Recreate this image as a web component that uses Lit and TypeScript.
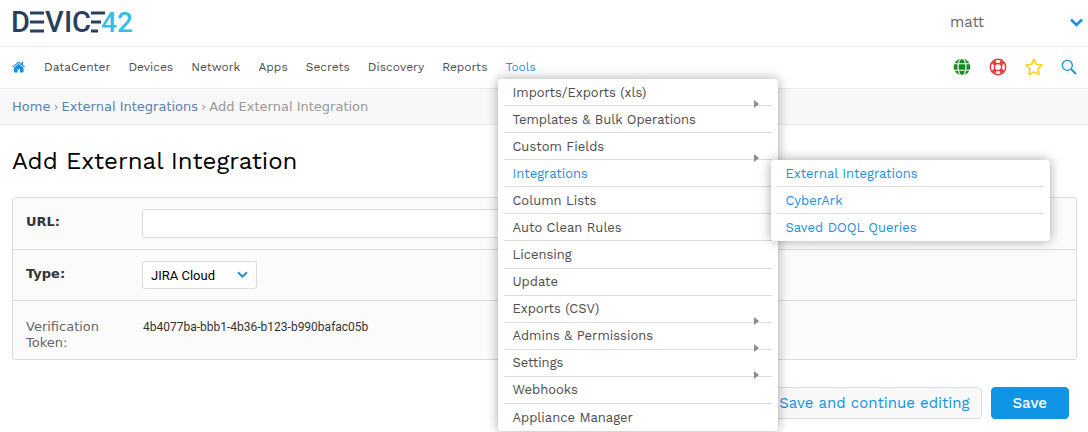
import { LitElement, html, css, svg, nothing } from "lit";
import { customElement, property, state } from "lit/decorators.js";

interface MenuEntry {
  label: string;
  arrow?: boolean;
  children?: string[];
}

const NAV = ["DataCenter", "Devices", "Network", "Apps", "Secrets", "Discovery", "Reports"];

const TOOLS: MenuEntry[] = [
  { label: "Imports/Exports (xls)", arrow: true },
  { label: "Templates & Bulk Operations" },
  { label: "Custom Fields", arrow: true },
  { label: "Integrations", children: ["External Integrations", "CyberArk", "Saved DOQL Queries"] },
  { label: "Column Lists" },
  { label: "Auto Clean Rules" },
  { label: "Licensing" },
  { label: "Update" },
  { label: "Exports (CSV)", arrow: true },
  { label: "Admins & Permissions", arrow: true },
  { label: "Settings", arrow: true },
  { label: "Webhooks" },
  { label: "Appliance Manager" },
];

// The two E letters of the wordmark are drawn as three stacked bars.
const bars = (x: number, widths: number[]) =>
  widths.map((w, i) => svg`<rect x=${x} y=${6.5 + i * 9} width=${w} height="3"></rect>`);

@customElement("d42-logo")
class D42Logo extends LitElement {
  static styles = css`
    :host { display: block; line-height: 0; }
    svg { display: block; overflow: visible; }
    .word { font-family: Roboto, sans-serif; font-size: 29px; fill: #2a3f5c; font-weight: 500; }
    .num { fill: #35bdeb; font-size: 28px; }
  `;
  render() {
    return html`<svg width="124" height="36" viewBox="0 0 124 36" role="img" aria-label="Device42">
      <g class="word">
        <text x="-1" y="27">D</text>
        ${bars(18, [14, 14, 14])}
        <text x="33" y="27">V</text>
        <text x="52" y="27">I</text>
        <text x="60" y="27">C</text>
        ${bars(79, [14, 10, 7])}
        <text class="num" x="89" y="27">42</text>
      </g>
    </svg>`;
  }
}

@customElement("tools-menu")
class ToolsMenu extends LitElement {
  @property({ attribute: false }) entries: MenuEntry[] = [];
  static styles = css`
    :host { display: block; font-size: 13px; }
    ul { list-style: none; margin: 0; padding: 0 6px; box-sizing: border-box; background: #fff;
      border-radius: 4px; box-shadow: 0 0 12px rgba(0, 0, 0, 0.35); }
    .main { display: grid; grid-auto-rows: 1fr; width: 280px; height: 352px; }
    .sub { position: absolute; left: 267px; top: 0; z-index: 2; width: 279px; display: grid;
      grid-auto-rows: 27px; }
    li { position: relative; display: flex; align-items: stretch; border-bottom: 1px solid #dcdcdc; }
    li:last-child { border-bottom: 0; }
    a { flex: 1; display: flex; align-items: center; padding: 0 8px; color: #4d4d4d;
      text-decoration: none; white-space: nowrap; }
    .active, .sub a { color: #1e8fe0; }
    .arrow { position: absolute; right: 13px; bottom: -3px; border-left: 5px solid #8c8c8c;
      border-top: 4px solid transparent; border-bottom: 4px solid transparent; }
  `;
  render() {
    return html`<ul class="main">
      ${this.entries.map(
        (e) => html`<li>
          <a class=${e.children ? "active" : ""} href="#">${e.label}</a>
          ${e.arrow ? html`<span class="arrow"></span>` : nothing}
          ${e.children
            ? html`<ul class="sub">${e.children.map((c) => html`<li><a href="#">${c}</a></li>`)}</ul>`
            : nothing}
        </li>`
      )}
    </ul>`;
  }
}

@customElement("app-root")
class AppRoot extends LitElement {
  @state() private url = "";

  static styles = css`
    :host { display: block; height: 100vh; overflow: hidden; background: #fff; color: #333;
      font-family: "Work Sans", Inter, sans-serif; }
    a { text-decoration: none; color: inherit; }
    svg { display: block; }
    .top { display: flex; align-items: center; justify-content: space-between; height: 46px;
      padding: 0 5px 0 12px; border-bottom: 1px solid #eaeaea; }
    .user { display: flex; align-items: center; justify-content: space-between; width: 133px;
      padding: 0 0 2px; border: 0; background: none; color: #666; font: 15px "Work Sans", Inter, sans-serif; }
    .nav { display: flex; align-items: center; justify-content: space-between; height: 39px;
      padding: 0 11px 2px 12px; border-bottom: 1px solid #eaeaea; font-size: 12px; color: #4d4d4d; }
    .links { display: flex; align-items: center; align-self: stretch; gap: 18px; }
    .tools { position: relative; display: flex; align-items: center; align-self: stretch; color: #1e8fe0; }
    .drop { position: absolute; left: -7px; top: 32px; z-index: 5; }
    .icons { display: flex; align-items: center; gap: 18px; }
    .crumbs { display: flex; align-items: center; gap: 3px; height: 35px; padding: 0 12px;
      background: #f8f8f8; border-bottom: 1px solid #eaeaea; color: #999;
      font-family: "DejaVu Sans", sans-serif; font-size: 13px; }
    .crumbs a { color: #5b80b2; }
    .page { padding: 20px 11px 0 12px; }
    h1 { margin: 0 0 20px; font-size: 24px; line-height: 32px; font-weight: 400; color: #000; }
    .rows { border: 1px solid #dcdcdc; border-radius: 3px; background: #fbfbfb; }
    .row { display: grid; grid-template-columns: 104px 1fr; column-gap: 12px; padding: 11px 13px;
      border-bottom: 1px solid #dcdcdc; }
    .row:last-child { border-bottom: 0; padding: 18px 13px 8px; }
    .label { font: 13px/16px "DejaVu Sans", sans-serif; color: #666; }
    .bold { font-weight: 700; color: #333; padding-top: 5px; }
    .field { box-sizing: border-box; border: 1px solid #dcdcdc; border-radius: 3px; background: #fff;
      color: #000; font: 13px Roboto, sans-serif; }
    .url { width: 500px; height: 29px; padding: 0 8px; }
    .pick { position: relative; justify-self: start; }
    .select { appearance: none; display: block; width: 115px; height: 28px; padding: 0 8px; }
    .pick svg { position: absolute; right: 9px; top: 10px; pointer-events: none; }
    .token { font: 12px/16px Roboto, sans-serif; color: #333; padding-left: 1px; }
    .actions { display: flex; justify-content: flex-end; gap: 9px; padding: 27px 8px 0; }
    .btn { height: 32px; box-sizing: border-box; border: 1px solid #dcdcdc; border-radius: 4px;
      background: #f8f8f8; padding: 0 11px; color: #1492e6; font: 15px "Work Sans", Inter, sans-serif; }
    .primary { border-color: #1095e6; background: #1095e6; color: #fff; padding: 0 21px; font-weight: 500; }
  `;

  render() {
    return html`
      <header class="top">
        <a href="#"><d42-logo></d42-logo></a>
        <button class="user">
          matt
          <svg width="13" height="9" viewBox="0 0 13 9" fill="none" stroke="#1492e6" stroke-width="2.6">
            <path d="M1 1.5 6.5 7 12 1.5"></path>
          </svg>
        </button>
      </header>
      <nav class="nav">
        <div class="links">
          <a href="#" aria-label="Home">
            <svg width="14" height="12" viewBox="0 0 15 12" fill="#1492e6">
              <path d="M7.1 2.6 2 6.9V11c0 .5.3.8.8.8H6V8.2h2.4v3.6h3.2c.5 0 .8-.3.8-.8V6.9z"></path>
              <path d="M7.1 0 .3 5.7l.8.9 6-5 6.1 5 .8-.9-2.2-1.9V.4h-1.7v2z"></path>
            </svg>
          </a>
          ${NAV.map((n) => html`<a href="#">${n}</a>`)}
          <div class="tools">
            <a href="#">Tools</a>
            <tools-menu class="drop" .entries=${TOOLS}></tools-menu>
          </div>
        </div>
        <div class="icons">
          <a href="#" aria-label="Language">
            <svg width="18" height="18" viewBox="0 0 18 18">
              <circle cx="9" cy="9" r="8.3" fill="#1c8a1c"></circle>
              <g fill="none" stroke="#fff" stroke-width="1.1">
                <ellipse cx="9" cy="9" rx="4" ry="8.6"></ellipse>
                <path d="M0 5.7h18M0 12.3h18"></path>
              </g>
            </svg>
          </a>
          <a href="#" aria-label="Help">
            <svg width="18" height="18" viewBox="0 0 18 18" fill="none" stroke="#e93a3a">
              <circle cx="9" cy="9" r="7.7" stroke-width="1.5"></circle>
              <circle cx="9" cy="9" r="3.6" stroke-width="1.5"></circle>
              <path d="M3.8 3.8l2.7 2.7M14.2 3.8l-2.7 2.7M3.8 14.2l2.7-2.7M14.2 14.2l-2.7-2.7" stroke-width="3.2"></path>
              <path d="M6.5 2.6v3M11.5 2.6v3M6.5 12.4v3M11.5 12.4v3" stroke-width="1"></path>
            </svg>
          </a>
          <a href="#" aria-label="Favorites">
            <svg width="18" height="18" viewBox="0 0 18 18" fill="none" stroke="#fbd11b" stroke-width="1.6"
              stroke-linejoin="round">
              <path d="M9 1.2l2.4 5 5.6.8-4 3.9.9 5.6L9 13.9l-4.9 2.6.9-5.6L1 7l5.6-.8z"></path>
            </svg>
          </a>
          <a href="#" aria-label="Search">
            <svg width="16" height="16" viewBox="0 0 16 16" fill="none" stroke="#1492e6">
              <circle cx="6.3" cy="6.3" r="5" stroke-width="1.3"></circle>
              <path d="M10 10l5 5" stroke-width="1.8"></path>
            </svg>
          </a>
        </div>
      </nav>
      <div class="crumbs">
        <a href="#">Home</a><span>›</span><a href="#">External Integrations</a><span>›</span>
        <span>Add External Integration</span>
      </div>
      <main class="page">
        <h1>Add External Integration</h1>
        <form @submit=${(e: Event) => e.preventDefault()}>
          <div class="rows">
            <div class="row">
              <label class="label bold" for="url">URL:</label>
              <input class="field url" id="url" type="text" .value=${this.url}
                @input=${(e: Event) => (this.url = (e.target as HTMLInputElement).value)} />
            </div>
            <div class="row">
              <label class="label bold" for="type">Type:</label>
              <div class="pick">
                <select class="field select" id="type"><option>JIRA Cloud</option></select>
                <svg width="11" height="8" viewBox="0 0 11 8" fill="none" stroke="#1492e6" stroke-width="2">
                  <path d="M1 1.2 5.5 5.7 10 1.2"></path>
                </svg>
              </div>
            </div>
            <div class="row">
              <span class="label">Verification Token:</span>
              <span class="token">4b4077ba-bbb1-4b36-b123-b990bafac05b</span>
            </div>
          </div>
          <div class="actions">
            <button class="btn" type="button">Save and continue editing</button>
            <button class="btn primary" type="submit">Save</button>
          </div>
        </form>
      </main>
    `;
  }
}
